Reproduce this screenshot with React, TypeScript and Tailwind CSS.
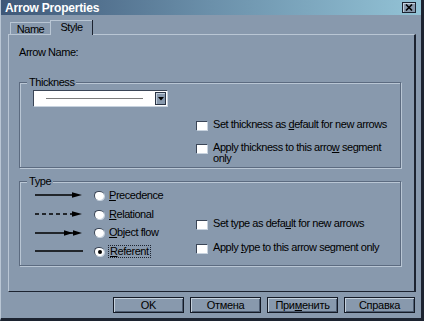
import type { ReactNode } from "react";

const font = { fontFamily: '"Liberation Sans", Arial, sans-serif' };

function U({ children }: { children: ReactNode }) {
  return <span className="underline underline-offset-[1px]">{children}</span>;
}

function Checkbox({ children, className = "" }: { children: ReactNode; className?: string }) {
  return (
    <div className={`flex items-start gap-[6px] ${className}`}>
      <span className="mt-[2px] h-[9px] w-[11px] shrink-0 border-t border-l border-[#3a4556] bg-white shadow-[1px_1px_0_#c8d3df]" />
      <span className="whitespace-nowrap leading-[11px]">{children}</span>
    </div>
  );
}

function Radio({ checked }: { checked?: boolean }) {
  return (
    <span className="relative flex h-[9px] w-[10px] shrink-0 items-center justify-center rounded-full border-t border-l border-[#3a4556] bg-white shadow-[1px_1px_0_#c8d3df]">
      {checked ? <span className="h-[4px] w-[4px] rounded-full bg-black" /> : null}
    </span>
  );
}

function ArrowLine({ kind }: { kind: "solid" | "dashed" | "double" | "plain" }) {
  return (
    <svg width="52" height="8" viewBox="0 0 52 8" className="shrink-0">
      {kind === "dashed" ? (
        <line x1="2" y1="4" x2="40" y2="4" stroke="#000" strokeWidth="1.6" strokeDasharray="4 3" />
      ) : (
        <line x1="2" y1="4" x2={kind === "plain" ? 50 : 42} y2="4" stroke="#000" strokeWidth="1.6" />
      )}
      {kind === "solid" || kind === "dashed" ? <polygon points="39,1.2 49,4 39,6.8" fill="#000" /> : null}
      {kind === "double" ? (
        <>
          <polygon points="31,1.2 40,4 31,6.8" fill="#000" />
          <polygon points="40,1.2 49,4 40,6.8" fill="#000" />
        </>
      ) : null}
    </svg>
  );
}

function Group({ label, className, children }: { label: string; className: string; children: ReactNode }) {
  return (
    <div className={`relative border border-[#5c6b80] shadow-[inset_1px_1px_0_#b9c6d4,1px_1px_0_#b9c6d4] ${className}`}>
      <span className="absolute -top-[7px] left-[7px] bg-[#8899ad] px-[2px] leading-[12px]">{label}</span>
      {children}
    </div>
  );
}

function Btn({ children }: { children: ReactNode }) {
  return (
    <button
      type="button"
      className="flex h-[16px] w-[71px] items-center justify-center border border-[#141a26] bg-[#8899ad] text-[11px] leading-none tracking-[-0.3px] text-black shadow-[inset_1px_1px_0_#c4d0dc,inset_-1px_-1px_0_#4e5d72]"
    >
      {children}
    </button>
  );
}

const rows = [
  { k: "solid" as const, label: <><U>P</U>recedence</> },
  { k: "dashed" as const, label: <><U>R</U>elational</> },
  { k: "double" as const, label: <><U>O</U>bject flow</> },
  { k: "plain" as const, label: <><U>R</U>eferent</> },
];

export default function App() {
  return (
    <div
      className="flex h-[321px] w-[424px] flex-col overflow-hidden border-r-[3px] border-b-[3px] border-l border-r-[#1c2330] border-b-[#1c2330] border-l-[#b9c6d4] bg-[#8899ad] text-[11px] tracking-[-0.45px] text-black"
      style={font}
    >
      {/* title bar */}
      <div className="flex h-[15px] shrink-0 items-center justify-between bg-gradient-to-r from-[#3f5878] via-[#6b90aa] to-[#93c3d6] pl-[4px] pr-[5px]">
        <span className="text-[12px] font-bold leading-none tracking-[-0.2px] text-white">Arrow Properties</span>
        <span className="flex h-[11px] w-[14px] items-center justify-center border border-[#1c2330] bg-[#8899ad] shadow-[inset_1px_1px_0_#c4d0dc]">
          <svg width="8" height="7" viewBox="0 0 8 7">
            <path d="M1 0.5 L7 6.5 M7 0.5 L1 6.5" stroke="#000" strokeWidth="1.6" />
          </svg>
        </span>
      </div>

      {/* tabs */}
      <div className="mt-[5px] flex h-[14px] shrink-0 items-end pl-[9px]">
        <div className="flex h-[12px] w-[40px] items-center justify-center border-t border-l border-[#b9c6d4] pt-[1px] leading-none">
          Name
        </div>
        <div className="relative -mb-[1px] flex h-[15px] w-[42px] items-center justify-center border-t border-l border-[#b9c6d4] bg-[#8899ad] pb-[2px] leading-none shadow-[1px_0_0_#1c2330]">
          Style
        </div>
      </div>

      {/* tab panel */}
      <div className="ml-[7px] mr-[5px] flex h-[258px] shrink-0 flex-col border-t border-l border-r-2 border-b border-t-[#b9c6d4] border-l-[#b9c6d4] border-r-[#1c2330] border-b-[#1c2330] pl-[10px] pr-[13px]">
        <div className="mt-[12px] leading-none">Arrow Name:</div>

        <Group label="Thickness" className="mt-[24px] h-[86px]">
          <div className="ml-[13px] mt-[7px] flex h-[16px] w-[134px] items-center border-t border-l border-[#3a4556] bg-white shadow-[1px_1px_0_#c8d3df]">
            <div className="flex flex-1 items-center px-[12px]">
              <div className="h-[1px] w-full bg-[#7b7b7b]" />
            </div>
            <div className="mr-[1px] flex h-[13px] w-[11px] items-center justify-center border border-[#2a3444] bg-[#8899ad] shadow-[inset_1px_1px_0_#c4d0dc]">
              <svg width="6" height="4" viewBox="0 0 6 4">
                <polygon points="0,0 6,0 3,3.5" fill="#000" />
              </svg>
            </div>
          </div>
          <div className="ml-[176px] mt-[13px] flex flex-col">
            <Checkbox>
              Set thickness as <U>d</U>efault for new arrows
            </Checkbox>
            <Checkbox className="mt-[12px]">
              <>
                Apply thickness to this arro<U>w</U> segment
                <br />
                only
              </>
            </Checkbox>
          </div>
        </Group>

        <Group label="Type" className="mt-[13px] h-[85px]">
          <div className="flex">
            <div className="ml-[13px] mt-[4px] flex w-[163px] shrink-0 flex-col">
              {rows.map((r, i) => (
                <div key={i} className="flex h-[18.7px] items-center">
                  <ArrowLine kind={r.k} />
                  <span className="ml-[9px]">
                    <Radio checked={i === 3} />
                  </span>
                  <span
                    className={`ml-[5px] leading-[11px] ${i === 3 ? "px-[1px] outline outline-1 outline-dotted outline-[#1c2330]" : ""}`}
                  >
                    {r.label}
                  </span>
                </div>
              ))}
            </div>
            <div className="mt-[36px] flex flex-col">
              <Checkbox>
                Set type as defa<U>u</U>lt for new arrows
              </Checkbox>
              <Checkbox className="mt-[13px]">
                Apply <U>t</U>ype to this arrow segment only
              </Checkbox>
            </div>
          </div>
        </Group>
      </div>

      {/* buttons */}
      <div className="mt-[5px] flex justify-end gap-[6px] pr-[6px]">
        <Btn>OK</Btn>
        <Btn>Отмена</Btn>
        <Btn>
          При<U>м</U>енить
        </Btn>
        <Btn>Справка</Btn>
      </div>
    </div>
  );
}
